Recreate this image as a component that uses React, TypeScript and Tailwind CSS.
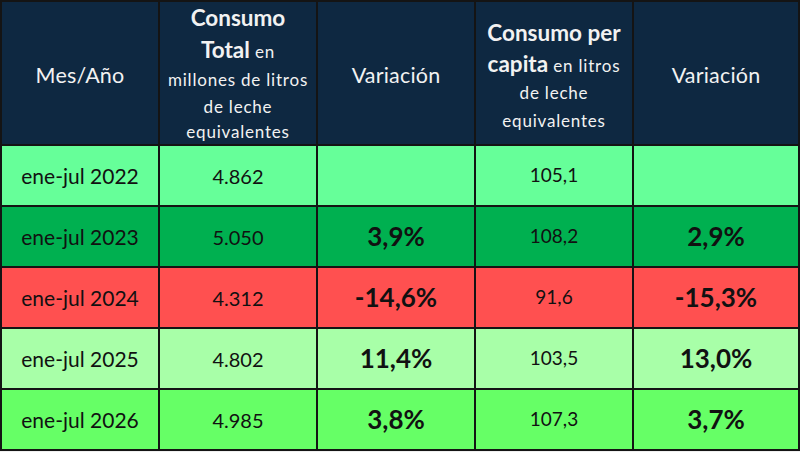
import React from "react";

const rows = [
  { bg: "bg-[#66ff99]", mes: "ene-jul 2022", total: "4.862", var1: "", pc: "105,1", var2: "" },
  { bg: "bg-[#00b050]", mes: "ene-jul 2023", total: "5.050", var1: "3,9%", pc: "108,2", var2: "2,9%" },
  { bg: "bg-[#ff5050]", mes: "ene-jul 2024", total: "4.312", var1: "-14,6%", pc: "91,6", var2: "-15,3%" },
  { bg: "bg-[#a8ffa8]", mes: "ene-jul 2025", total: "4.802", var1: "11,4%", pc: "103,5", var2: "13,0%" },
  { bg: "bg-[#66ff66]", mes: "ene-jul 2026", total: "4.985", var1: "3,8%", pc: "107,3", var2: "3,7%" },
];

export default function App() {
  return (
    <div className="w-[800px] h-[452px] bg-[#f0f0f0]" style={{ fontFamily: "Lato, 'Open Sans', sans-serif" }}>
      <div className="w-[800px] h-[451px] bg-[#141414] p-[2px] grid grid-cols-[156px_156px_156px_156px_164px] grid-rows-[142px_repeat(5,59px)] gap-[2px]">
        <div className="bg-[#0e2841] text-[#f2f2f2] flex items-center justify-center text-[21.5px] pt-[4px] tracking-[0.2px]">Mes/Año</div>
        <div className="bg-[#0e2841] text-[#f2f2f2] flex flex-col items-center text-center">
          <div className="h-[32px] leading-[32px] text-[22.5px] font-bold">Consumo</div>
          <div className="h-[32px] leading-[32px]">
            <span className="text-[22.5px] font-bold">Total</span>
            <span className="text-[17px] tracking-[0.8px]"> en</span>
          </div>
          <div className="h-[28px] leading-[28px] text-[17px] tracking-[0.8px]">millones de litros</div>
          <div className="h-[25px] leading-[25px] text-[17px] tracking-[0.8px]">de leche</div>
          <div className="h-[25px] leading-[25px] text-[17px] tracking-[0.8px]">equivalentes</div>
        </div>
        <div className="bg-[#0e2841] text-[#f2f2f2] flex items-center justify-center text-[21.5px] pt-[4px] tracking-[0.2px]">Variación</div>
        <div className="bg-[#0e2841] text-[#f2f2f2] flex flex-col items-center justify-center text-center pt-[4px]">
          <div className="h-[32px] leading-[32px] text-[22.5px] font-bold">Consumo per</div>
          <div className="h-[30px] leading-[30px]">
            <span className="text-[22.5px] font-bold">capita</span>
            <span className="text-[17px] tracking-[0.8px]"> en litros</span>
          </div>
          <div className="h-[28px] leading-[28px] text-[17px] tracking-[0.8px]">de leche</div>
          <div className="h-[27px] leading-[27px] text-[17px] tracking-[0.8px]">equivalentes</div>
        </div>
        <div className="bg-[#0e2841] text-[#f2f2f2] flex items-center justify-center text-[21.5px] pt-[4px] tracking-[0.2px]">Variación</div>

        {rows.map((r) => (
          <React.Fragment key={r.mes}>
            <div className={`${r.bg} flex items-center justify-center text-[21px] text-[#111]`}>{r.mes}</div>
            <div className={`${r.bg} flex items-center justify-center text-[20px] text-[#111]`}>{r.total}</div>
            <div className={`${r.bg} flex items-center justify-center text-[26px] font-bold text-[#111]`}>{r.var1}</div>
            <div className={`${r.bg} flex items-center justify-center text-[19px] text-[#111]`}>{r.pc}</div>
            <div className={`${r.bg} flex items-center justify-center text-[26px] font-bold text-[#111]`}>{r.var2}</div>
          </React.Fragment>
        ))}
      </div>
    </div>
  );
}
